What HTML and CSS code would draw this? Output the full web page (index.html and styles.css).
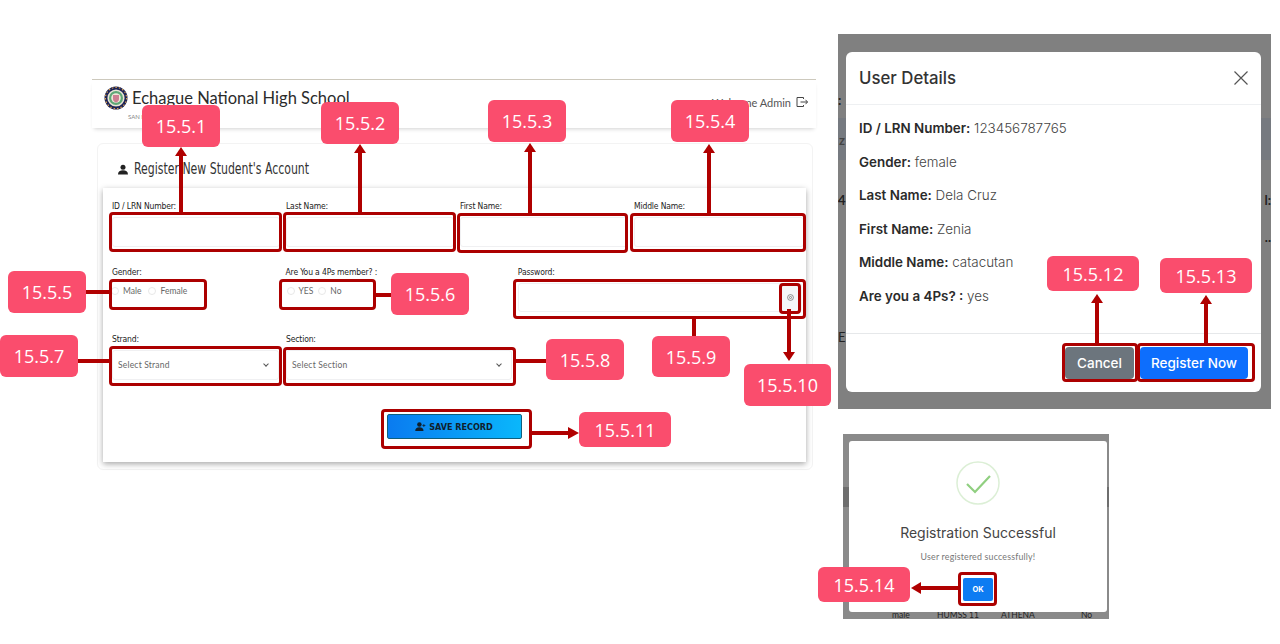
FILE: index.html
```html
<!DOCTYPE html>
<html lang="en">
<head>
    <meta charset="UTF-8">
    <meta name="viewport" content="width=device-width, initial-scale=1.0">
    <title>Register New Student's Account</title>
    <link rel="stylesheet" href="styles.css">
</head>
<body>

<div class="slide">

    <!-- registration form screenshot -->
    <div class="shot shot-form">
        <div class="topbar">
            <div class="brand">
                <svg class="logo" viewBox="0 0 24 28" width="24" height="28">
                    <circle cx="12" cy="14" r="11.5" fill="#1c2356"/>
                    <circle cx="12" cy="14" r="10.6" fill="none" stroke="#e0a24a" stroke-width="1.200" stroke-dasharray="1.500 2"/>
                    <circle cx="12" cy="14" r="8.600" fill="#e9e4d6"/>
                    <circle cx="12" cy="14" r="7" fill="#5fa777"/>
                    <circle cx="12" cy="14" r="4.800" fill="#efe7d8"/>
                    <path d="M9 11h6v4c0 2-1.500 3-3 3.600-1.500-.6-3-1.600-3-3.600z" fill="#cf7f93"/>
                </svg>
                <div>
                    <div class="brand-name">Echague National High School</div>
                    <div class="brand-sub">SAN F</div>
                </div>
            </div>
            <div class="welcome">
                Welcome Admin
                <svg viewBox="0 0 12 12" width="12" height="12" fill="none" stroke="#444" stroke-width="1">
                    <path d="M7.500 3V1.500H1v9h6.500V9M4.500 6h7M9.500 3.800 11.500 6 9.500 8.200"/>
                </svg>
            </div>
        </div>

        <div class="outer-card">
            <h2 class="form-title">
                <svg viewBox="0 0 12 12" width="10" height="11" fill="#222">
                    <circle cx="6" cy="3.200" r="3"/>
                    <path d="M0 12c0-3.500 2.500-5 6-5s6 1.500 6 5z"/>
                </svg>
                <span class="form-title-text">Register New Student's Account</span>
            </h2>

            <div class="form-card">
                <div class="row-names">
                    <div class="field"><label>ID / LRN Number:</label><div class="input"></div></div>
                    <div class="field"><label>Last Name:</label><div class="input"></div></div>
                    <div class="field"><label>First Name:</label><div class="input"></div></div>
                    <div class="field"><label>Middle Name:</label><div class="input"></div></div>
                </div>

                <div class="row-options">
                    <div class="field col-narrow">
                        <label>Gender:</label>
                        <div class="radios">
                            <span class="radio"></span>Male
                            <span class="radio"></span>Female
                        </div>
                    </div>
                    <div class="field col-member">
                        <label>Are You a 4Ps member? :</label>
                        <div class="radios">
                            <span class="radio"></span>YES
                            <span class="radio"></span>No
                        </div>
                    </div>
                    <div class="field col-pass">
                        <label>Password:</label>
                        <div class="input input-pass">
                            <span class="eye">
                                <svg viewBox="0 0 12 12" width="7" height="7" fill="none" stroke="#666" stroke-width="1.200">
                                    <circle cx="6" cy="6" r="5"/>
                                    <circle cx="6" cy="6" r="1.800"/>
                                </svg>
                            </span>
                        </div>
                    </div>
                </div>

                <div class="row-selects">
                    <div class="field col-narrow">
                        <label>Strand:</label>
                        <div class="input select">Select Strand<span class="chev"></span></div>
                    </div>
                    <div class="field col-section">
                        <label>Section:</label>
                        <div class="input select">Select Section<span class="chev"></span></div>
                    </div>
                </div>

                <div class="row-save">
                    <button class="save-btn">
                        <svg viewBox="0 0 14 12" width="11" height="9" fill="#10202c">
                            <circle cx="5.500" cy="3.200" r="3"/>
                            <path d="M0 12c0-3.500 2-5 5.500-5s5.500 1.500 5.500 5z"/>
                            <path d="M11 2.500h1v1.500h1.500v1H12v1.500h-1V5H9.500V4H11z"/>
                        </svg>
                        SAVE RECORD
                    </button>
                </div>
            </div>
        </div>
    </div>

    <!-- user details modal screenshot -->
    <div class="shot shot-details">
        <span class="ghost-band"></span>
        <span class="ghost g-a">:</span>
        <span class="ghost g-b">z</span>
        <span class="ghost g-c">4</span>
        <span class="ghost g-d">l:</span>
        <span class="ghost g-e">..</span>
        <span class="ghost g-f">E</span>
        <div class="dialog">
            <div class="dialog-head">
                <span>User Details</span>
                <svg viewBox="0 0 14 14" width="14" height="14" stroke="#555" stroke-width="1.200">
                    <path d="M.5.5l13 13M13.500.5l-13 13"/>
                </svg>
            </div>
            <div class="dialog-body">
                <p><b>ID / LRN Number:</b> 123456787765</p>
                <p><b>Gender:</b> female</p>
                <p><b>Last Name:</b> Dela Cruz</p>
                <p><b>First Name:</b> Zenia</p>
                <p><b>Middle Name:</b> catacutan</p>
                <p><b>Are you a 4Ps? :</b> yes</p>
            </div>
            <div class="dialog-foot">
                <button class="btn btn-grey">Cancel</button>
                <button class="btn btn-blue">Register Now</button>
            </div>
        </div>
    </div>

    <!-- success alert screenshot -->
    <div class="shot shot-success">
        <span class="ghost-band-small"></span>
        <div class="alert">
            <svg class="check" viewBox="0 0 44 44" width="44" height="44" fill="none">
                <circle cx="22" cy="22" r="21" stroke="#dcefd6" stroke-width="1.500"/>
                <path d="M11 23l8 8 15-16" stroke="#90cf80" stroke-width="2.200"/>
            </svg>
            <div class="alert-title">Registration Successful</div>
            <div class="alert-text">User registered successfully!</div>
            <button class="ok-btn">OK</button>
        </div>
        <div class="table-peek">
            <span>male</span><span>HUMSS 11</span><span>ATHENA</span><span>No</span>
        </div>
    </div>

    <!-- red highlight boxes -->
    <div class="mark m-id"></div>
    <div class="mark m-last"></div>
    <div class="mark m-first"></div>
    <div class="mark m-middle"></div>
    <div class="mark m-gender"></div>
    <div class="mark m-member"></div>
    <div class="mark m-pass"></div>
    <div class="mark m-eye"></div>
    <div class="mark m-strand"></div>
    <div class="mark m-section"></div>
    <div class="mark m-save"></div>
    <div class="mark m-cancel"></div>
    <div class="mark m-register"></div>
    <div class="mark m-ok"></div>

    <!-- arrows -->
    <svg class="arrows" viewBox="0 0 1280 644" width="1280" height="644">
        <g fill="#b00000" stroke="none">
            <rect x="179" y="155" width="4" height="58"/><polygon points="181,147 175,156 187,156"/>
            <rect x="358" y="152" width="4" height="61"/><polygon points="360,144 354,153 366,153"/>
            <rect x="528" y="151" width="4" height="62"/><polygon points="530,143 524,152 536,152"/>
            <rect x="707" y="152" width="4" height="62"/><polygon points="709,144 703,153 715,153"/>
            <rect x="85" y="290" width="25" height="4"/>
            <rect x="375" y="293" width="17" height="4"/>
            <rect x="77" y="359" width="33" height="4"/>
            <rect x="515" y="359" width="32" height="4"/>
            <rect x="692" y="318" width="4" height="19"/>
            <rect x="787" y="309" width="4" height="44"/><polygon points="789,361 783,352 795,352"/>
            <rect x="531" y="431" width="40" height="4"/><polygon points="579,433 568,427 568,439"/>
            <rect x="1095" y="302" width="4" height="42"/><polygon points="1097,294 1091,303 1103,303"/>
            <rect x="1204" y="303" width="4" height="41"/><polygon points="1206,295 1200,304 1212,304"/>
            <rect x="920" y="586" width="39" height="4"/><polygon points="911,588 921,582 921,594"/>
        </g>
    </svg>

    <!-- number tags -->
    <div class="tag t1">15.5.1</div>
    <div class="tag t2">15.5.2</div>
    <div class="tag t3">15.5.3</div>
    <div class="tag t4">15.5.4</div>
    <div class="tag t5">15.5.5</div>
    <div class="tag t6">15.5.6</div>
    <div class="tag t7">15.5.7</div>
    <div class="tag t8">15.5.8</div>
    <div class="tag t9">15.5.9</div>
    <div class="tag t10">15.5.10</div>
    <div class="tag t11">15.5.11</div>
    <div class="tag t12">15.5.12</div>
    <div class="tag t13">15.5.13</div>
    <div class="tag t14">15.5.14</div>

</div>

</body>
</html>
```

FILE: styles.css
```css
body {
    margin: 0;
    background-color: #fff;
    font-family: Lato, sans-serif;
    color: #333;
}

.slide {
    position: relative;
    width: 1280px;
    height: 644px;
    overflow: hidden;
}

.shot {
    position: absolute;
    box-sizing: border-box;
}

/* form screenshot */
.shot-form {
    left: 92px;
    top: 79px;
    width: 724px;
    height: 395px;
    border-top: 1px solid #cdc9bd;
}

.topbar {
    display: flex;
    justify-content: space-between;
    height: 48px;
    padding: 4px 8px 0 12px;
    box-sizing: border-box;
    box-shadow: 0 3px 4px -2px rgba(0, 0, 0, 0.18);
}

.brand {
    display: flex;
    gap: 4px;
}

.logo {
    flex: none;
}

.brand-name {
    margin-top: 3px;
    font-size: 16.500px;
    line-height: 22px;
    color: #2b2b2b;
    white-space: nowrap;
}

.brand-sub {
    margin-top: 4px;
    margin-left: -4px;
    font-size: 6px;
    color: #888;
}

.welcome {
    display: flex;
    align-items: center;
    gap: 5px;
    height: 30px;
    margin-top: 3px;
    font-size: 11px;
    color: #555;
}

.outer-card {
    width: 716px;
    height: 327px;
    margin: 15px 0 0 5px;
    padding: 0 5px;
    box-sizing: border-box;
    border: 1px solid #f3f3f3;
    border-radius: 6px;
}

.form-title {
    display: flex;
    align-items: center;
    gap: 6px;
    height: 44px;
    margin: 0;
    padding: 6px 0 0 15px;
    box-sizing: border-box;
    font-family: "Liberation Sans Narrow", "DejaVu Sans Condensed", sans-serif;
    font-size: 15px;
    font-weight: 400;
    color: #333;
}

.form-title-text {
    transform: scaleX(0.81);
    transform-origin: left center;
    white-space: nowrap;
}

.form-card {
    width: 703px;
    height: 274px;
    padding: 13px 4px 0 9px;
    box-sizing: border-box;
    background-color: #fff;
    box-shadow: 0 2px 6px rgba(0, 0, 0, 0.35);
}

.field label {
    display: block;
    height: 11px;
    margin-bottom: 5px;
    font-family: "Liberation Sans Narrow", "DejaVu Sans Condensed", sans-serif;
    font-size: 8.500px;
    letter-spacing: -0.15px;
    line-height: 11px;
    color: #222;
}

.input {
    height: 30px;
    box-sizing: border-box;
    border: 1px solid #f0f0f2;
    border-radius: 3px;
    background-color: #fff;
}

.row-names {
    display: grid;
    grid-template-columns: 168px 168px 168px 170px;
    column-gap: 6px;
}

.row-options {
    display: flex;
    margin-top: 20px;
}

.col-narrow {
    width: 173px;
}

.col-member {
    width: 233px;
    margin-left: 1px;
}

.col-pass {
    width: 285px;
}

.radios {
    display: flex;
    align-items: center;
    gap: 4px;
    height: 15px;
    margin-top: 4px;
    font-size: 8.500px;
    color: #666;
}

.radio {
    width: 8px;
    height: 8px;
    margin-left: -1px;
    box-sizing: border-box;
    border: 1px solid #e8e8e8;
    border-radius: 50%;
}

.radio + .radio {
    margin-left: 3px;
}

.col-member .radio {
    margin-left: 1px;
}

.input-pass {
    display: flex;
    justify-content: flex-end;
    height: 29px;
}

.eye {
    display: flex;
    align-items: center;
    justify-content: center;
    width: 19px;
    margin-right: 1px;
    background-color: #f5f6f8;
}

.row-selects {
    display: flex;
    margin-top: 22px;
}

.col-section {
    width: 226px;
    margin-left: 1px;
}

.select {
    display: flex;
    align-items: center;
    justify-content: space-between;
    height: 30px;
    padding: 0 10px 0 5px;
    font-size: 8.500px;
    letter-spacing: 0.2px;
    color: #666;
}

.col-narrow .select {
    width: 167px;
}

.chev {
    width: 3px;
    height: 3px;
    margin-top: -2px;
    border-right: 1px solid #555;
    border-bottom: 1px solid #555;
    transform: rotate(45deg);
}

.row-save {
    display: flex;
    justify-content: center;
    margin-top: 34px;
}

.save-btn {
    display: flex;
    align-items: center;
    justify-content: center;
    gap: 3px;
    width: 135px;
    height: 25px;
    margin-left: -6px;
    padding: 0;
    border: 1px solid #0f5f7d;
    border-radius: 2px;
    background: linear-gradient(90deg, #0a7bf0, #0ab7fb);
    font-family: "Liberation Sans Narrow", "DejaVu Sans Condensed", sans-serif;
    font-size: 9px;
    font-weight: 700;
    color: #10202c;
}

/* user details modal */
.shot-details {
    left: 838px;
    top: 34px;
    width: 433px;
    height: 375px;
    padding: 18px 10px 0 8px;
    background-color: #808080;
    overflow: hidden;
}

.ghost-band {
    position: absolute;
    left: 0;
    top: 84px;
    width: 100%;
    height: 42px;
    background-color: #767a80;
}

.ghost {
    position: absolute;
    font-size: 13px;
    font-weight: 700;
    color: #222;
}

.g-a { left: 0; top: 58px; }
.g-b { left: 1px; top: 98px; color: #444; }
.g-c { left: 0; top: 158px; }
.g-d { right: 0; top: 158px; }
.g-e { right: 0; top: 195px; }
.g-f { left: 0; top: 295px; font-weight: 400; }

.dialog {
    position: relative;
    width: 415px;
    height: 340px;
    display: flex;
    flex-direction: column;
    border-radius: 6px;
    background-color: #fff;
    font-family: Inter, sans-serif;
}

.dialog-head {
    display: flex;
    align-items: center;
    justify-content: space-between;
    height: 53px;
    padding: 0 13px;
    box-sizing: border-box;
    border-bottom: 1px solid #eef0f2;
    font-size: 16.800px;
    font-weight: 500;
    color: #333;
}

.dialog-body {
    flex: 1;
    padding: 14px 13px 0;
    font-size: 13.400px;
    font-weight: 300;
    color: #444;
}

.dialog-body p {
    height: 33.500px;
    margin: 0;
    line-height: 18px;
}

.dialog-body b {
    font-weight: 600;
    color: #2b2b2b;
}

.dialog-foot {
    display: flex;
    justify-content: flex-end;
    gap: 6px;
    height: 59px;
    padding: 13px 13px 0 0;
    box-sizing: border-box;
    border-top: 1px solid #e6e8ea;
}

.btn {
    height: 32px;
    padding: 0;
    border: 0;
    border-radius: 4px;
    font-family: Inter, sans-serif;
    font-size: 13.500px;
    font-weight: 500;
    color: #fff;
}

.btn-grey {
    width: 69px;
    background-color: #6c757d;
}

.btn-blue {
    width: 108px;
    background-color: #0d6efd;
}

/* success alert */
.shot-success {
    left: 843px;
    top: 434px;
    width: 266px;
    height: 185px;
    padding: 7px 2px 0 6px;
    background-color: #8a8a8a;
}

.ghost-band-small {
    position: absolute;
    left: 0;
    top: 53px;
    width: 100%;
    height: 20px;
    background-color: #6e6e6e;
}

.alert {
    position: relative;
    display: flex;
    flex-direction: column;
    align-items: center;
    width: 258px;
    height: 171px;
    padding-top: 20px;
    box-sizing: border-box;
    border-radius: 3px;
    background-color: #fff;
}

.check {
    flex: none;
}

.alert-title {
    margin-top: 17px;
    font-family: Inter, sans-serif;
    font-size: 14px;
    line-height: 22px;
    color: #444;
}

.alert-text {
    margin-top: 7px;
    font-size: 8.800px;
    line-height: 12px;
    letter-spacing: 0.200px;
    color: #777;
}

.ok-btn {
    width: 30px;
    height: 23px;
    margin-top: 15px;
    padding: 0;
    border: 0;
    border-radius: 2px;
    background-color: #0d7cf2;
    font-family: Inter, sans-serif;
    font-size: 7.500px;
    font-weight: 700;
    color: #fff;
}

.table-peek {
    display: flex;
    height: 7px;
    margin-left: 43px;
    font-size: 8.500px;
    line-height: 7px;
    color: #222;
}

.table-peek span:nth-child(1) { width: 45px; }
.table-peek span:nth-child(2) { width: 64px; }
.table-peek span:nth-child(3) { width: 80px; }

/* annotation layer */
.mark {
    position: absolute;
    box-sizing: border-box;
    border: 3px solid #ac0000;
    border-radius: 4px;
}

.m-id { left: 109px; top: 212px; width: 173px; height: 40px; }
.m-last { left: 283px; top: 212px; width: 173px; height: 40px; }
.m-first { left: 457px; top: 213px; width: 171px; height: 40px; }
.m-middle { left: 630px; top: 213px; width: 176px; height: 39px; }
.m-gender { left: 109px; top: 279px; width: 98px; height: 31px; }
.m-member { left: 279px; top: 279px; width: 97px; height: 31px; }
.m-pass { left: 513px; top: 279px; width: 293px; height: 40px; }
.m-eye { left: 779px; top: 283px; width: 22px; height: 31px; }
.m-strand { left: 109px; top: 346px; width: 173px; height: 40px; }
.m-section { left: 283px; top: 347px; width: 233px; height: 39px; }
.m-save { left: 381px; top: 409px; width: 151px; height: 40px; }
.m-cancel { left: 1062px; top: 343px; width: 76px; height: 39px; }
.m-register { left: 1137px; top: 343px; width: 118px; height: 39px; }
.m-ok { left: 958px; top: 572px; width: 39px; height: 34px; }

.arrows {
    position: absolute;
    left: 0;
    top: 0;
}

.tag {
    position: absolute;
    display: flex;
    align-items: center;
    justify-content: center;
    box-sizing: border-box;
    width: 78px;
    height: 42px;
    border-radius: 6px;
    background-color: #fa4d6d;
    font-family: "Open Sans", sans-serif;
    font-size: 18px;
    color: #fff;
}

.t1 { left: 142px; top: 105px; }
.t2 { left: 321px; top: 102px; }
.t3 { left: 488px; top: 100px; }
.t4 { left: 671px; top: 100px; }
.t5 { left: 8px; top: 271px; }
.t6 { left: 391px; top: 273px; }
.t7 { left: 0; top: 335px; }
.t8 { left: 546px; top: 339px; height: 41px; }
.t9 { left: 652px; top: 336px; height: 41px; }
.t10 { left: 744px; top: 364px; width: 87px; }
.t11 { left: 579px; top: 412px; width: 92px; height: 35px; }
.t12 { left: 1047px; top: 256px; width: 92px; height: 35px; }
.t13 { left: 1160px; top: 258px; width: 92px; height: 35px; }
.t14 { left: 818px; top: 567px; width: 92px; height: 35px; }
```
